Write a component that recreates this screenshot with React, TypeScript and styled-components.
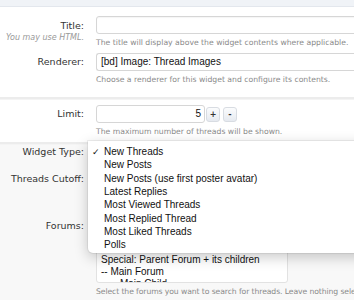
import styled, { createGlobalStyle } from "styled-components";

const GlobalStyle = createGlobalStyle`
  html, body {
    margin: 0;
    padding: 0;
    background: #ffffff;
  }
  body {
    font-family: "DejaVu Sans", Verdana, sans-serif;
    overflow: hidden;
  }
`;

const controlFont = `"Liberation Sans", Arial, sans-serif`;

const menuItems = [
  "New Threads",
  "New Posts",
  "New Posts (use first poster avatar)",
  "Latest Replies",
  "Most Viewed Threads",
  "Most Replied Thread",
  "Most Liked Threads",
  "Polls",
];

export default function App() {
  return (
    <>
      <GlobalStyle />
      <Page>
        <TopBand />
        <Section $pad="9px 0 12px">
          <Row>
            <LabelCell $top={3}>
              <Label>Title:</Label>
              <Note>You may use HTML.</Note>
            </LabelCell>
            <Field>
              <TextInput />
              <Hint>The title will display above the widget contents where applicable.</Hint>
            </Field>
          </Row>
          <Row $gap={5}>
            <LabelCell>
              <Label>Renderer:</Label>
            </LabelCell>
            <Field>
              <SelectBox>[bd] Image: Thread Images</SelectBox>
              <Hint>Choose a renderer for this widget and configure its contents.</Hint>
            </Field>
          </Row>
        </Section>
        <Divider />
        <Section $pad="5px 0 5px">
          <Row>
            <LabelCell>
              <Label>Limit:</Label>
            </LabelCell>
            <Field>
              <SpinRow>
                <NumberInput>5</NumberInput>
                <SpinButton>+</SpinButton>
                <SpinButton>-</SpinButton>
              </SpinRow>
              <Hint>The maximum number of threads will be shown.</Hint>
            </Field>
          </Row>
        </Section>
        <Divider />
        <LowerSection>
          <PlainRow $top={0}>
            <Label>Widget Type:</Label>
          </PlainRow>
          <PlainRow $top={13}>
            <Label>Threads Cutoff:</Label>
          </PlainRow>
          <PlainRow $top={33}>
            <Label>Forums:</Label>
          </PlainRow>
          <Row $gap={17}>
            <LabelCell />
            <Field>
              <ListBox>
                <ListItem>Special: Parent Forum + its children</ListItem>
                <ListItem>-- Main Forum</ListItem>
                <ListItem>-- -- Main Child</ListItem>
              </ListBox>
              <Hint $tight>Select the forums you want to search for threads. Leave nothing selected</Hint>
            </Field>
          </Row>

          <Menu>
            {menuItems.map((item, i) => (
              <MenuItem key={item}>
                <Check>{i === 0 ? "✓" : ""}</Check>
                {item}
              </MenuItem>
            ))}
          </Menu>
        </LowerSection>
      </Page>
    </>
  );
}

const Page = styled.div`
  width: 354px;
  height: 300px;
  overflow: hidden;
  background: #ffffff;
`;

const TopBand = styled.div`
  height: 6px;
  background: #f0f3f7;
  border-bottom: 1px solid #e3e7ed;
`;

const Section = styled.div<{ $pad: string }>`
  padding: ${(p) => p.$pad};
  display: flex;
  flex-direction: column;
`;

const Divider = styled.div`
  height: 2px;
  background: #ececec;
  border-bottom: 1px solid #f4f4f4;
`;

const Row = styled.div<{ $gap?: number }>`
  display: grid;
  grid-template-columns: 84px 1fr;
  column-gap: 12px;
  margin-top: ${(p) => p.$gap ?? 0}px;
`;

const PlainRow = styled.div<{ $top: number }>`
  width: 84px;
  display: flex;
  justify-content: flex-end;
  margin-top: ${(p) => p.$top}px;
`;

const LabelCell = styled.div<{ $top?: number }>`
  display: flex;
  flex-direction: column;
  align-items: flex-end;
  padding-top: ${(p) => p.$top ?? 2}px;
`;

const Label = styled.div`
  font-size: 9.5px;
  line-height: 14px;
  color: #333;
  white-space: nowrap;
`;

const Note = styled.div`
  font-size: 8px;
  line-height: 10px;
  font-style: italic;
  color: #999;
  white-space: nowrap;
`;

const Field = styled.div`
  display: flex;
  flex-direction: column;
  min-width: 0;
`;

const TextInput = styled.div`
  height: 16px;
  width: 300px;
  border: 1px solid #d6d6d6;
  border-radius: 3px;
  background: #fff;
  box-shadow: inset 0 1px 1px rgba(0, 0, 0, 0.04);
`;

const SelectBox = styled.div`
  height: 16px;
  width: 300px;
  border: 1px solid #d6d6d6;
  border-right: none;
  border-radius: 3px 0 0 3px;
  background: #fff;
  font-family: ${controlFont};
  font-size: 10px;
  line-height: 16px;
  padding-left: 4px;
  color: #111;
  white-space: nowrap;
`;

const Hint = styled.div<{ $tight?: boolean }>`
  margin-top: 3px;
  font-size: 7.7px;
  line-height: 11px;
  letter-spacing: ${(p) => (p.$tight ? "-0.1px" : "0")};
  color: #8a8a8a;
  white-space: nowrap;
`;

const SpinRow = styled.div`
  display: flex;
  align-items: center;
`;

const NumberInput = styled.div`
  width: 104px;
  height: 16px;
  border: 1px solid #d6d6d6;
  border-radius: 3px;
  background: #fff;
  font-family: ${controlFont};
  font-size: 10px;
  line-height: 16px;
  text-align: right;
  padding-right: 3px;
  color: #111;
  margin-right: 1px;
`;

const SpinButton = styled.div`
  width: 12px;
  height: 13px;
  margin-right: 3px;
  border: 1px solid #d8dce2;
  border-radius: 3px;
  background: linear-gradient(#fbfcfd, #e6eaf0);
  font-size: 8px;
  font-weight: bold;
  line-height: 13px;
  text-align: center;
  color: #333;
`;

const LowerSection = styled.div`
  position: relative;
  background: #f8f8f8;
  height: 200px;
`;

const ListBox = styled.div`
  width: 186px;
  height: 28px;
  padding: 3px 0 0 4px;
  overflow: hidden;
  border: 1px solid #e2e2e2;
  border-radius: 3px;
  background: #fff;
`;

const ListItem = styled.div`
  font-family: ${controlFont};
  font-size: 10px;
  line-height: 12px;
  color: #111;
  white-space: nowrap;
`;

const Menu = styled.div`
  position: absolute;
  left: 88px;
  top: -4px;
  width: 290px;
  padding: 4px 0 2px;
  background: #fff;
  border-radius: 0 0 5px 5px;
  box-shadow: 0 4px 14px rgba(0, 0, 0, 0.22), 0 0 0 1px rgba(0, 0, 0, 0.06);
`;

const MenuItem = styled.div`
  display: flex;
  align-items: center;
  height: 13.3px;
  font-family: ${controlFont};
  font-size: 10px;
  color: #111;
  white-space: nowrap;
`;

const Check = styled.span`
  width: 16px;
  padding-left: 4px;
  box-sizing: border-box;
  font-family: "DejaVu Sans", sans-serif;
  font-size: 9px;
`;
